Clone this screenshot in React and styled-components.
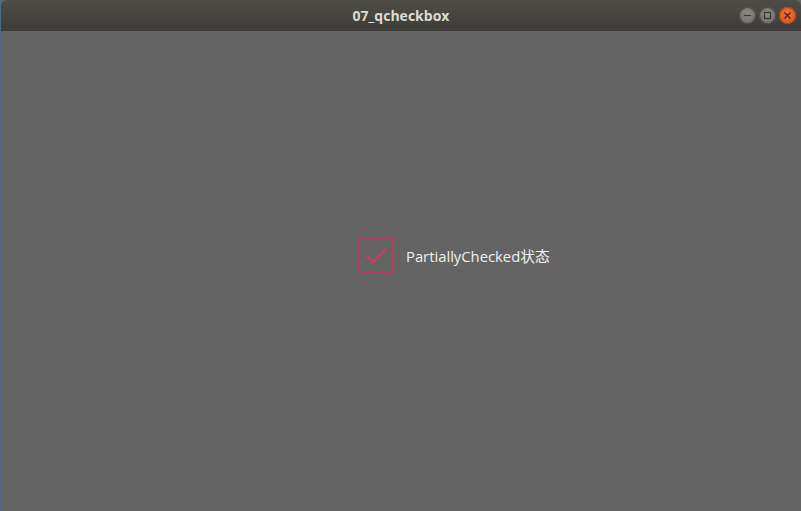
import React, { useState } from "react";
import styled, { createGlobalStyle } from "styled-components";

const GlobalStyle = createGlobalStyle`
  html, body {
    margin: 0;
    padding: 0;
    background: #646464;
  }
  #root {
    height: 511px;
  }
`;

const Window = styled.div`
  width: 801px;
  height: 511px;
  display: flex;
  flex-direction: column;
  background: #646464;
  border-left: 1px solid #4f6a86;
  box-sizing: border-box;
  overflow: hidden;
`;

const TitleBar = styled.div`
  height: 31px;
  flex: 0 0 31px;
  display: flex;
  align-items: center;
  justify-content: center;
  position: relative;
  background: linear-gradient(#4f4d48, #3d3c38);
  border-radius: 6px 6px 0 0;
  color: #dfdbd2;
  font-family: "Open Sans", "Noto Sans", sans-serif;
  font-weight: 700;
  font-size: 14px;
`;

const Controls = styled.div`
  position: absolute;
  right: 5px;
  top: 7px;
  display: flex;
  gap: 3px;
`;

const ControlButton = styled.div`
  width: 17px;
  height: 17px;
  border-radius: 50%;
  display: flex;
  align-items: center;
  justify-content: center;
  background: ${(p) =>
    p.$close
      ? "radial-gradient(circle at 50% 40%, #f0753f, #d9491b)"
      : "radial-gradient(circle at 50% 40%, #8a8983, #6a6964)"};
  box-shadow: inset 0 0 0 1px ${(p) => (p.$close ? "#b84018" : "#4a4945")};
`;

const Content = styled.div`
  flex: 1;
  display: flex;
  align-items: center;
  justify-content: flex-start;
  padding: 0 0 32px 357px;
`;

const CheckRow = styled.label`
  display: flex;
  align-items: center;
  gap: 12px;
  height: 36px;
  cursor: pointer;
  font-family: "Open Sans", "Noto Sans", "Noto Sans CJK SC", sans-serif;
  font-size: 14.8px;
  color: #f0f0f0;
`;

const Indicator = styled.svg`
  flex: 0 0 36px;
  display: block;
`;

export default function App() {
  const [checked, setChecked] = useState(true);
  return (
    <>
      <GlobalStyle />
      <Window>
        <TitleBar>
          07_qcheckbox
          <Controls>
            <ControlButton>
              <svg width="9" height="9" viewBox="0 0 9 9">
                <path d="M1 4.5h7" stroke="#3a3935" strokeWidth="1.2" />
              </svg>
            </ControlButton>
            <ControlButton>
              <svg width="9" height="9" viewBox="0 0 9 9">
                <rect x="1.5" y="1.5" width="6" height="6" fill="none" stroke="#3a3935" strokeWidth="1.2" />
              </svg>
            </ControlButton>
            <ControlButton $close>
              <svg width="9" height="9" viewBox="0 0 9 9">
                <path d="M1.5 1.5l6 6M7.5 1.5l-6 6" stroke="#5a1f0a" strokeWidth="1.3" />
              </svg>
            </ControlButton>
          </Controls>
        </TitleBar>
        <Content>
          <CheckRow onClick={() => setChecked(!checked)}>
            <Indicator width="36" height="36" viewBox="0 0 36 36">
              <rect x="1" y="1" width="34" height="34" fill="none" stroke="#c9365d" strokeWidth="1.6" />
              {checked && (
                <path
                  d="M9 19l6 6L27 13"
                  fill="none"
                  stroke="#d23a64"
                  strokeWidth="2.4"
                  strokeLinecap="round"
                  strokeLinejoin="round"
                />
              )}
            </Indicator>
            PartiallyChecked状态
          </CheckRow>
        </Content>
      </Window>
    </>
  );
}
